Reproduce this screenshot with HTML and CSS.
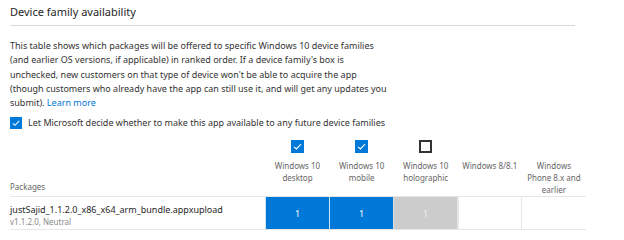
FILE: index.html
```html
<!DOCTYPE html>
<html lang="en">
<head>
    <meta charset="UTF-8">
    <title>Device family availability</title>
    <link rel="stylesheet" href="styles.css">
</head>
<body>
    <div class="page">
        <h2 class="title">Device family availability</h2>

        <p class="intro">This table shows which packages will be offered to specific Windows 10 device families<br>
            (and earlier OS versions, if applicable) in ranked order. If a device family's box is<br>
            unchecked, new customers on that type of device won't be able to acquire the app<br>
            (though customers who already have the app can still use it, and will get any updates you<br>
            submit). <a href="#" class="link">Learn more</a></p>

        <label class="option">
            <span class="check on">
                <svg viewBox="0 0 13 13"><path d="M3 6.8 L5.4 9 L10 4.2" /></svg>
            </span>
            Let Microsoft decide whether to make this app available to any future device families
        </label>

        <table class="families">
            <thead>
                <tr>
                    <th class="pkg-head">Packages</th>
                    <th>
                        <span class="check on"><svg viewBox="0 0 13 13"><path d="M3 6.8 L5.4 9 L10 4.2" /></svg></span>
                        <div class="fam">Windows 10<br>desktop</div>
                    </th>
                    <th>
                        <span class="check on"><svg viewBox="0 0 13 13"><path d="M3 6.8 L5.4 9 L10 4.2" /></svg></span>
                        <div class="fam">Windows 10<br>mobile</div>
                    </th>
                    <th>
                        <span class="check off"></span>
                        <div class="fam">Windows 10<br>holographic</div>
                    </th>
                    <th>
                        <span class="check none"></span>
                        <div class="fam">Windows 8/8.1</div>
                    </th>
                    <th>
                        <span class="check none"></span>
                        <div class="fam">Windows<br>Phone 8.x and<br>earlier</div>
                    </th>
                </tr>
            </thead>
            <tbody>
                <tr>
                    <td class="pkg">
                        <div class="pkg-name">justSajid_1.1.2.0_x86_x64_arm_bundle.appxupload</div>
                        <div class="pkg-ver">v1.1.2.0, Neutral</div>
                    </td>
                    <td class="rank on">1</td>
                    <td class="rank on">1</td>
                    <td class="rank off">1</td>
                    <td class="rank"></td>
                    <td class="rank"></td>
                </tr>
            </tbody>
        </table>
    </div>
</body>
</html>
```

FILE: styles.css
```css
* {
    margin: 0;
    padding: 0;
    box-sizing: border-box;
}

body {
    font-family: 'Segoe UI', 'Noto Sans', sans-serif;
    background: white;
    color: #333;
}

.page {
    padding: 2px 10px 0 10px;
}

.title {
    width: 565px;
    font-size: 11px;
    font-weight: normal;
    line-height: 20px;
    color: #262626;
    padding-bottom: 3px;
    border-bottom: 1px solid #d9d9d9;
}

.intro {
    margin-top: 13px;
    font-size: 9px;
    line-height: 14.3px;
    white-space: nowrap;
    color: #333;
}

.link {
    color: #0078d7;
    text-decoration: none;
}

.option {
    display: flex;
    align-items: center;
    gap: 6px;
    margin-top: 6px;
    font-size: 9px;
    line-height: 14px;
    white-space: nowrap;
    color: #333;
}

.check {
    display: inline-block;
    width: 12px;
    height: 12px;
    flex-shrink: 0;
}

.check svg {
    display: block;
    width: 100%;
    height: 100%;
}

.check svg path {
    fill: none;
    stroke: white;
    stroke-width: 1.1;
}

.check.on {
    background: #0078d7;
}

.check.off {
    border: 2px solid #333;
    background: white;
}

.families {
    margin-top: 10px;
    border-collapse: collapse;
    table-layout: fixed;
    width: 576px;
}

.families th {
    width: 64px;
    vertical-align: top;
    font-weight: normal;
    font-size: 8px;
    line-height: 12px;
    white-space: nowrap;
    color: #666;
    text-align: center;
}

.families th .check {
    width: 13px;
    height: 13px;
    display: block;
    margin: 0 auto 7px auto;
}

.families th .check.none {
    visibility: hidden;
}

.families .pkg-head {
    width: 255px;
    text-align: left;
    vertical-align: bottom;
    padding-bottom: 3px;
}

.families tbody tr {
    border-top: 1px solid #e6e6e6;
    border-bottom: 1px solid #e6e6e6;
}

.pkg {
    height: 33px;
    padding-top: 6px;
    vertical-align: top;
}

.pkg-name {
    font-size: 9px;
    line-height: 13px;
    color: #262626;
}

.pkg-ver {
    font-size: 8px;
    line-height: 11px;
    color: #888;
}

.rank {
    border-left: 1px solid #e6e6e6;
    text-align: center;
    font-size: 9px;
    color: white;
}

.rank.on {
    background: #0078d7;
    border-left-color: #cfe2f5;
}

.rank.off {
    background: #cccccc;
    color: #eeeeee;
    border-left-color: #ddd;
    border-right: 2px solid #e6e6e6;
}
```
